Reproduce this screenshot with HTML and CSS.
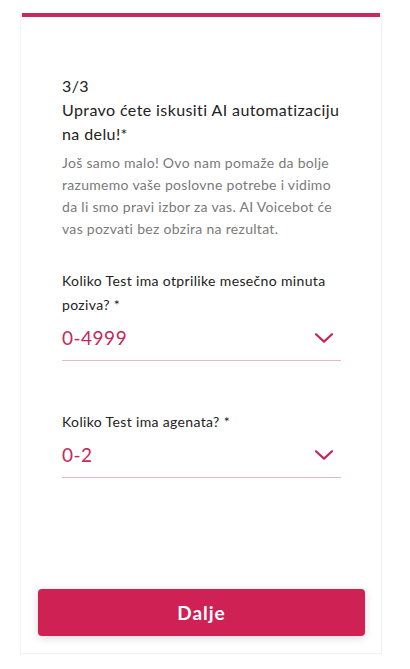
FILE: index.html
```html
<!DOCTYPE html>
<html lang="sr">
<head>
  <meta charset="UTF-8" />
  <meta name="viewport" content="width=device-width, initial-scale=1.0"/>
  <title>Upitnik | AI Voicebot</title>
  <link rel="stylesheet" href="styles.css">
</head>
<body>
  <div class="card">
    <div class="progress"></div>

    <div class="content">
      <div class="step">3/3</div>
      <h2 class="title">Upravo ćete iskusiti AI automatizaciju na delu!*</h2>
      <p class="intro">Još samo malo! Ovo nam pomaže da bolje razumemo vaše poslovne potrebe i vidimo da li smo pravi izbor za vas. AI Voicebot će vas pozvati bez obzira na rezultat.</p>

      <div class="field first">
        <label>Koliko Test ima otprilike mesečno minuta poziva? *</label>
        <div class="select">
          <span>0-4999</span>
          <svg width="18" height="10" viewBox="0 0 18 10"><path d="M1 1.2 L9 8.6 L17 1.2" fill="none" stroke="#c4295b" stroke-width="2.2" stroke-linecap="round" stroke-linejoin="round"/></svg>
        </div>
      </div>

      <div class="field">
        <label>Koliko Test ima agenata? *</label>
        <div class="select">
          <span>0-2</span>
          <svg width="18" height="10" viewBox="0 0 18 10"><path d="M1 1.2 L9 8.6 L17 1.2" fill="none" stroke="#c4295b" stroke-width="2.2" stroke-linecap="round" stroke-linejoin="round"/></svg>
        </div>
      </div>
    </div>

    <button class="next">Dalje</button>
  </div>
</body>
</html>
```

FILE: styles.css
```css
* {
  box-sizing: border-box;
  margin: 0;
  padding: 0;
  font-family: 'Lato', 'Noto Sans', sans-serif;
}

body {
  background: #ffffff;
  padding-top: 13px;
  color: #222;
}

.card {
  width: 362px;
  height: 641px;
  margin-left: 20px;
  border: 1px solid #f2f2f2;
  display: flex;
  flex-direction: column;
}

.progress {
  height: 4px;
  margin: -1px 1px 0;
  background: #c8285a;
}

.content {
  padding: 57px 40px 0 41px;
}

.step {
  font-size: 16px;
  line-height: 24px;
  letter-spacing: 0.4px;
  color: #222;
}

.title {
  font-size: 16px;
  font-weight: normal;
  line-height: 24px;
  letter-spacing: 0.4px;
  color: #222;
}

.intro {
  margin-top: 6px;
  font-size: 14px;
  line-height: 22px;
  letter-spacing: 0.3px;
  color: #7a7a7a;
}

.field {
  margin-top: 49px;
}

.field.first {
  margin-top: 29px;
}

.field label {
  display: block;
  font-size: 14px;
  line-height: 24px;
  letter-spacing: 0.35px;
  color: #222;
}

.select {
  display: flex;
  align-items: center;
  justify-content: space-between;
  margin-top: 7px;
  padding: 0 8px 8px 0;
  border-bottom: 1px solid #e6b8c7;
}

.select span {
  font-size: 19px;
  line-height: 28px;
  letter-spacing: 0.5px;
  color: #c4295b;
}

.next {
  margin: auto 16px 17px 17px;
  height: 47px;
  border: none;
  border-radius: 4px;
  background: #d02155;
  color: #fff;
  font-size: 19px;
  font-weight: bold;
  letter-spacing: 1px;
  box-shadow: 0 2px 8px rgba(0, 0, 0, 0.15);
  cursor: pointer;
}
```
